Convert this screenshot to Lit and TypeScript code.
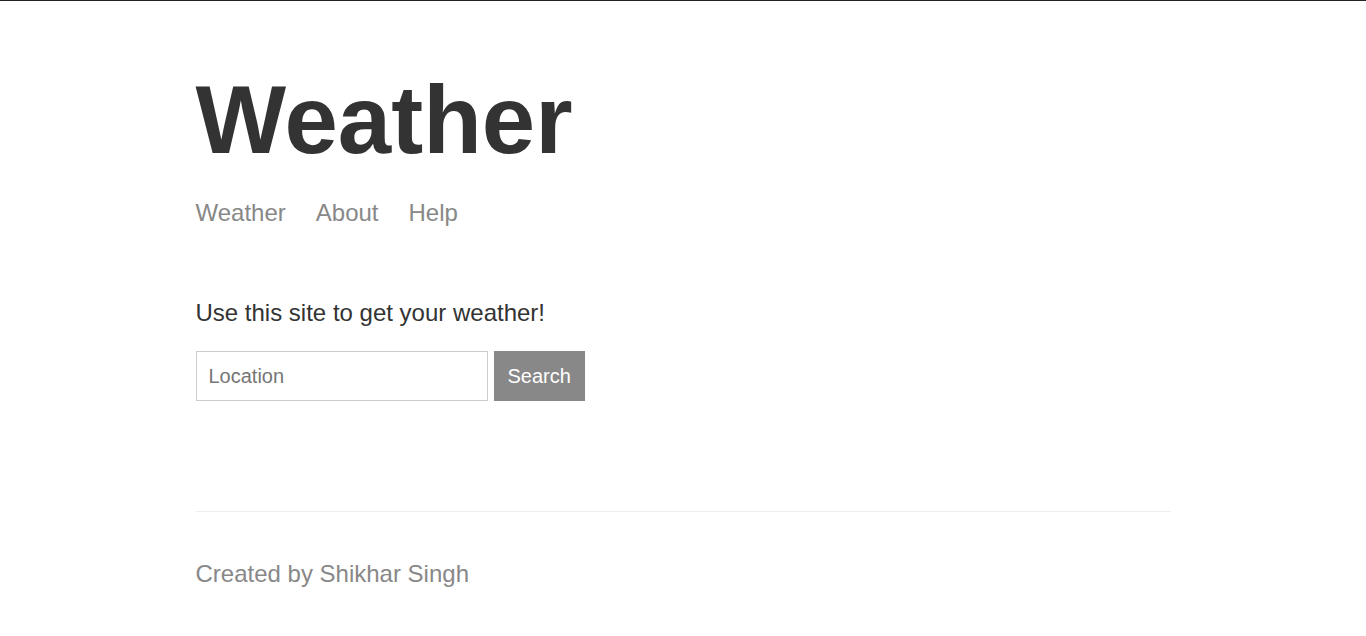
import { LitElement, html, css } from "lit";
import { customElement, state } from "lit/decorators.js";

@customElement("app-root")
export class AppRoot extends LitElement {
  static styles = css`
    :host {
      display: flex;
      flex-direction: column;
      box-sizing: border-box;
      min-height: 100vh;
      max-width: 975px;
      margin: 0 auto;
      padding-top: 48px;
      color: #333333;
      font-family: "Liberation Sans", Arial, sans-serif;
      font-size: 24px;
      line-height: 28px;
    }
    :host::before {
      content: "";
      position: fixed;
      top: 0;
      left: 0;
      right: 0;
      height: 1px;
      background: #222222;
    }
    .content {
      flex-grow: 1;
    }
    .title {
      margin: 18px 0 25px;
      font-size: 96px;
      line-height: 108px;
    }
    .nav {
      display: flex;
      gap: 30px;
    }
    .nav a {
      color: #888888;
      text-decoration: none;
    }
    .intro {
      margin: 72px 0 24px;
    }
    .search {
      display: flex;
      gap: 6px;
    }
    .field,
    .button {
      box-sizing: border-box;
      height: 50px;
      margin: 0;
      border-radius: 0;
      font-family: inherit;
      font-size: 20px;
    }
    .field {
      width: 292px;
      padding: 12px;
      border: 1px solid #cccccc;
      background: #ffffff;
      color: #333333;
    }
    .button {
      padding: 12px 13px;
      border: 1px solid #888888;
      background: #888888;
      color: #ffffff;
      cursor: pointer;
    }
    .footer {
      padding: 48px 0;
      border-top: 1px solid #eeeeee;
      color: #888888;
    }
    .footer p {
      margin: 0;
    }
  `;

  @state() private location = "";

  private onInput(event: Event) {
    this.location = (event.target as HTMLInputElement).value;
  }

  private onSubmit(event: Event) {
    event.preventDefault();
  }

  render() {
    return html`
      <div class="content">
        <header>
          <h1 class="title">Weather</h1>
          <nav class="nav">
            <a href="#weather">Weather</a>
            <a href="#about">About</a>
            <a href="#help">Help</a>
          </nav>
        </header>
        <main>
          <p class="intro">Use this site to get your weather!</p>
          <form class="search" @submit=${this.onSubmit}>
            <input
              class="field"
              type="text"
              aria-label="Location"
              placeholder="Location"
              .value=${this.location}
              @input=${this.onInput}
            />
            <button class="button" type="submit">Search</button>
          </form>
        </main>
      </div>
      <footer class="footer">
        <p>Created by Shikhar Singh</p>
      </footer>
    `;
  }
}
